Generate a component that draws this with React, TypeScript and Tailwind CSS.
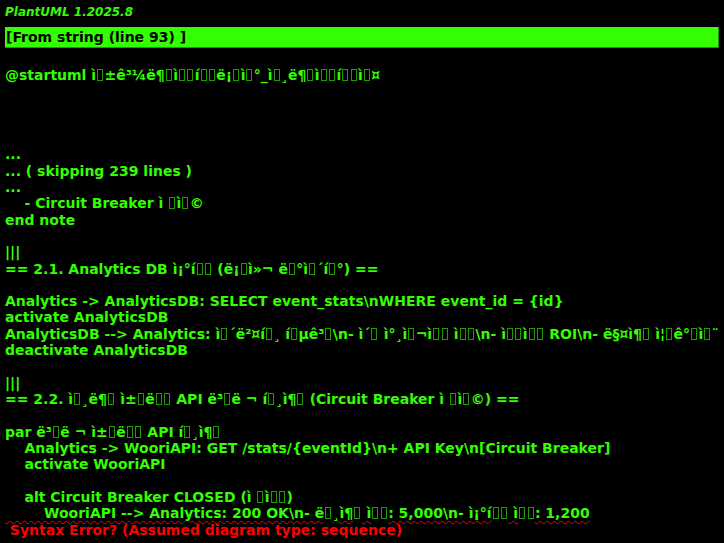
import React from 'react';

// "▯" marks a byte the renderer had no glyph for; drawn as a hollow box
const Line = ({ s }: { s: string }) => {
  const parts = s.split('▯');
  return (
    <>
      {parts.map((p, i) => (
        <React.Fragment key={i}>
          {p}
          {i < parts.length - 1 && (
            <span className="inline-block w-[6px] h-[12px] border border-[#1f9c01] ml-[1px] mr-[1.4px] align-[-1px]" />
          )}
        </React.Fragment>
      ))}
    </>
  );
};

const lines: string[] = [
  '...',
  '... ( skipping 239 lines )',
  '...',
  '    - Circuit Breaker ì ▯ì▯©',
  'end note',
  '',
  '|||',
  '== 2.1. Analytics DB ì¡°í▯▯ (ë¡▯ì»¬ ë▯°ì▯´í▯°) ==',
  '',
  'Analytics -> AnalyticsDB: SELECT event_stats\\nWHERE event_id = {id}',
  'activate AnalyticsDB',
  'AnalyticsDB --> Analytics: ì▯´ë²¤í▯¸ í▯µê³▯\\n- ì´▯ ì°¸ì▯¬ì▯▯ ì▯▯\\n- ì▯▯ì▯▯ ROI\\n- ë§¤ì¶▯ ì¦▯ê°▯ì▯¨',
  'deactivate AnalyticsDB',
  '',
  '|||',
  '== 2.2. ì▯¸ë¶▯ ì±▯ë▯▯ API ë³▯ë ¬ í▯¸ì¶▯ (Circuit Breaker ì ▯ì▯©) ==',
  '',
  'par ë³▯ë ¬ ì±▯ë▯▯ API í▯¸ì¶▯',
  '    Analytics -> WooriAPI: GET /stats/{eventId}\\n+ API Key\\n[Circuit Breaker]',
  '    activate WooriAPI',
  '',
  '    alt Circuit Breaker CLOSED (ì ▯ì▯▯)',
];

export default function App() {
  return (
    <div className="w-[724px] h-[543px] overflow-hidden bg-black text-[#33ff02] font-['DejaVu_Sans',sans-serif] font-bold whitespace-pre">
      <div className="pl-[5px] pt-[5px] text-[12px] leading-[14px] italic">PlantUML 1.2025.8</div>

      <div className="mx-[5px] mt-[8px] h-[21px] bg-[#33ff02] border-r border-b border-[#1c9a00] text-black text-[14px] leading-[16.3px] pl-[1px] pt-[2px]">
        [From string (line 93) ]
      </div>

      <div className="px-[5px] text-[14px] leading-[16.32px]">
        <div className="mt-[19px]">
          <Line s="@startuml ì▯±ê³¼ë¶▯ì▯▯í▯▯ë¡▯ì▯°_ì▯¸ë¶▯ì▯▯í▯▯ì▯¤" />
        </div>
        <div className="h-[63px]" />
        {lines.map((l, i) => (
          <div key={i} className="h-[16.32px]">
            <Line s={l} />
          </div>
        ))}
        <div className="h-[16.32px]">
          <span className="underline decoration-wavy decoration-[#ff0000] decoration-1 underline-offset-[2px]">
            <Line s="        WooriAPI --> Analytics: 200 OK\n- ë▯¸ì¶▯ ì▯▯: 5,000\n- ì¡°í▯▯ ì▯▯: 1,200" />
          </span>
        </div>
        <div className="text-[#ff0000]"> Syntax Error? (Assumed diagram type: sequence)</div>
      </div>
    </div>
  );
}
